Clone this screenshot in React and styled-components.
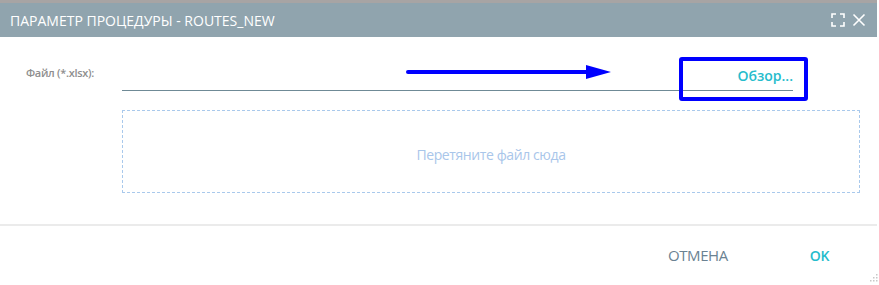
import { createGlobalStyle, styled } from "styled-components";

const GlobalStyle = createGlobalStyle`
  html, body {
    margin: 0;
    padding: 0;
    background: #ffffff;
  }
  body {
    font-family: "Open Sans", "Noto Sans", sans-serif;
  }
`;

const App = () => {
  return (
    <>
      <GlobalStyle />
      <Window>
        <TitleBar>
          <Title>ПАРАМЕТР ПРОЦЕДУРЫ - ROUTES_NEW</Title>
          <TitleIcons>
            <svg width="14" height="14" viewBox="0 0 14 14" fill="none" stroke="#ffffff" strokeWidth="1.6">
              <path d="M1 5V1h4M9 1h4v4M13 9v4H9M5 13H1V9" />
            </svg>
            <svg width="14" height="14" viewBox="0 0 14 14" fill="none" stroke="#ffffff" strokeWidth="1.6">
              <path d="M1.5 1.5l11 11M12.5 1.5l-11 11" />
            </svg>
          </TitleIcons>
        </TitleBar>
        <Body>
          <FieldRow>
            <Label>Файл (*.xlsx):</Label>
            <FileInput>
              <BrowseButton>Обзор...</BrowseButton>
            </FileInput>
          </FieldRow>
          <DropZone>Перетяните файл сюда</DropZone>
        </Body>
        <Footer>
          <FooterButton>ОТМЕНА</FooterButton>
          <FooterButton $primary>OK</FooterButton>
        </Footer>
        <Arrow width="210" height="16" viewBox="0 0 210 16">
          <path d="M2 8H185" stroke="#0000ff" strokeWidth="4" strokeLinecap="round" />
          <path d="M180 1L205 8L180 15Z" fill="#0000ff" />
        </Arrow>
        <Highlight />
        <Grip width="8" height="8" viewBox="0 0 8 8" fill="#c8c8c8">
          <rect x="6" y="0" width="1.5" height="1.5" />
          <rect x="3" y="3" width="1.5" height="1.5" />
          <rect x="6" y="3" width="1.5" height="1.5" />
          <rect x="0" y="6" width="1.5" height="1.5" />
          <rect x="3" y="6" width="1.5" height="1.5" />
          <rect x="6" y="6" width="1.5" height="1.5" />
        </Grip>
      </Window>
    </>
  );
};

const Window = styled.div`
  position: relative;
  display: flex;
  flex-direction: column;
  width: 877px;
  height: 285px;
  border-top: 3px solid #a7a4a4;
  box-sizing: border-box;
  background: #ffffff;
`;

const TitleBar = styled.div`
  display: flex;
  align-items: center;
  justify-content: space-between;
  height: 34px;
  padding: 0 11px 0 10px;
  background: #90a4ae;
`;

const Title = styled.span`
  color: #ffffff;
  font-size: 14px;
`;

const TitleIcons = styled.div`
  display: flex;
  align-items: center;
  gap: 7px;
`;

const Body = styled.div`
  display: flex;
  flex-direction: column;
  gap: 19px;
  padding: 18px 17px 0 26px;
  height: 189px;
  box-sizing: border-box;
  border-bottom: 2px solid #ebebeb;
`;

const FieldRow = styled.div`
  display: flex;
  align-items: flex-start;
`;

const Label = styled.span`
  width: 96px;
  padding-top: 10px;
  color: #8e8e8e;
  font-size: 11px;
  font-weight: 600;
  letter-spacing: -0.3px;
`;

const FileInput = styled.div`
  display: flex;
  justify-content: flex-end;
  align-items: center;
  width: 671px;
  height: 35px;
  border-bottom: 1px solid #6f8a96;
`;

const BrowseButton = styled.span`
  color: #26bccc;
  font-size: 14px;
  font-weight: 600;
  padding-top: 6px;
`;

const DropZone = styled.div`
  display: flex;
  align-items: center;
  justify-content: center;
  margin-left: 96px;
  padding-top: 6px;
  width: 738px;
  height: 83px;
  box-sizing: border-box;
  border: 1px dashed #a9c9ec;
  color: #a9c6ea;
  font-size: 14px;
  letter-spacing: -0.4px;
`;

const Footer = styled.div`
  display: flex;
  justify-content: flex-end;
  align-items: center;
  gap: 82px;
  height: 58px;
  padding-right: 48px;
`;

const FooterButton = styled.span`
  color: ${({ $primary }) => ($primary ? "#26bccc" : "#6b8292")};
  font-size: ${({ $primary }) => ($primary ? "14px" : "15px")};
  font-weight: ${({ $primary }) => ($primary ? 600 : 400)};
  letter-spacing: -0.4px;
`;

const Arrow = styled.svg`
  position: absolute;
  left: 406px;
  top: 61px;
`;

const Highlight = styled.div`
  position: absolute;
  left: 679px;
  top: 54px;
  width: 129px;
  height: 44px;
  box-sizing: border-box;
  border: 4px solid #0000ff;
  border-radius: 3px;
`;

const Grip = styled.svg`
  position: absolute;
  right: -1px;
  bottom: 3px;
`;

export default App;
